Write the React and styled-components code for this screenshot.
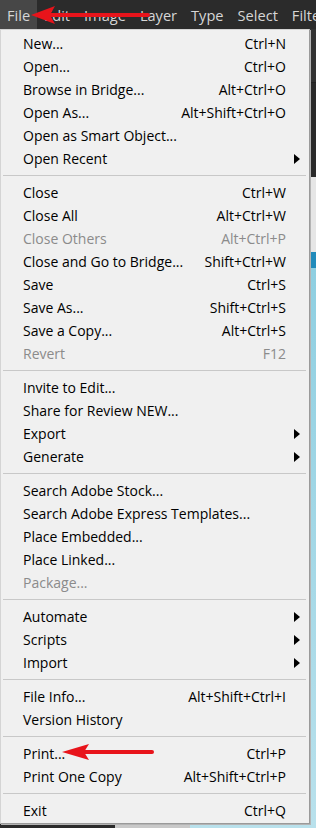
import React from "react";
import styled, { createGlobalStyle } from "styled-components";

const Global = createGlobalStyle`
  html, body { margin: 0; padding: 0; background: #2b2b2b; }
  body { font-family: "Open Sans", "Noto Sans", sans-serif; }
`;

const Screen = styled.div`
  position: relative;
  width: 316px;
  height: 828px;
  overflow: hidden;
  display: flex;
  flex-direction: column;
  background: #2b2b2b;
`;

const MenuBar = styled.div`
  height: 29px;
  display: flex;
  align-items: stretch;
  background: #2b2b2b;
  flex-shrink: 0;
`;

const BarItem = styled.div`
  display: flex;
  align-items: center;
  padding: 0 7px;
  font-size: 14.6px;
  color: #d6d6d6;
  white-space: nowrap;
  background: ${p => (p.active ? "#474747" : "transparent")};
`;

const Workspace = styled.div`
  flex: 1;
  display: flex;
  flex-direction: column;
`;

const OptionsBar = styled.div`
  height: 53px;
  background: #323232;
  border-bottom: 1px solid #222;
`;

const PanelBar = styled.div`
  height: 94px;
  background: #2a2a2a;
`;

const DocArea = styled.div`
  flex: 1;
  display: flex;
`;

const ToolColumn = styled.div`
  width: 115px;
  background: #2b2b2b;
`;

const Gutter = styled.div`
  width: 75px;
  background: #c9c9c9;
`;

const Document = styled.div`
  flex: 1;
  display: flex;
  flex-direction: column;
`;

const TabBand = styled.div`
  height: 75px;
  background: #e6e6e6;
`;

const Canvas = styled.div`
  flex: 1;
  background: linear-gradient(#218bbb 0, #218bbb 16px, #8fcfe1 16px, #b9e1ec 100%);
`;

const Dropdown = styled.div`
  position: absolute;
  top: 29px;
  left: 0;
  width: 308px;
  padding: 2px 0 1px;
  background: #f0f0f0;
  border: 1px solid #d4d4d4;
  border-right-color: #9a9a9a;
  border-bottom-color: #9a9a9a;
  box-shadow: 1px 1px 0 #b4b4b4;
`;

const Row = styled.div`
  height: 23px;
  display: grid;
  grid-template-columns: 1fr auto 23px;
  align-items: center;
  padding-left: 22px;
  font-size: 14px;
  color: ${p => (p.disabled ? "#8b8b8b" : "#000")};
  white-space: nowrap;
`;

const Shortcut = styled.span`
  text-align: right;
`;

const SubArrow = styled.span`
  justify-self: start;
  margin-left: 8px;
  width: 0;
  height: 0;
  border-top: 5px solid transparent;
  border-bottom: 5px solid transparent;
  border-left: 6px solid #000;
`;

const Separator = styled.div`
  height: 1px;
  margin: 5px 3px 5px 2px;
  background: #c8c8c8;
`;

const ArrowSvg = styled.svg`
  position: absolute;
  left: ${p => p.x}px;
  top: ${p => p.y}px;
  overflow: visible;
`;

const groups = [
  [
    ["New...", "Ctrl+N"],
    ["Open...", "Ctrl+O"],
    ["Browse in Bridge...", "Alt+Ctrl+O"],
    ["Open As...", "Alt+Shift+Ctrl+O"],
    ["Open as Smart Object..."],
    ["Open Recent", null, { sub: true }],
  ],
  [
    ["Close", "Ctrl+W"],
    ["Close All", "Alt+Ctrl+W"],
    ["Close Others", "Alt+Ctrl+P", { disabled: true }],
    ["Close and Go to Bridge...", "Shift+Ctrl+W"],
    ["Save", "Ctrl+S"],
    ["Save As...", "Shift+Ctrl+S"],
    ["Save a Copy...", "Alt+Ctrl+S"],
    ["Revert", "F12", { disabled: true }],
  ],
  [
    ["Invite to Edit..."],
    ["Share for Review NEW..."],
    ["Export", null, { sub: true }],
    ["Generate", null, { sub: true }],
  ],
  [
    ["Search Adobe Stock..."],
    ["Search Adobe Express Templates..."],
    ["Place Embedded..."],
    ["Place Linked..."],
    ["Package...", null, { disabled: true }],
  ],
  [
    ["Automate", null, { sub: true }],
    ["Scripts", null, { sub: true }],
    ["Import", null, { sub: true }],
  ],
  [
    ["File Info...", "Alt+Shift+Ctrl+I"],
    ["Version History"],
  ],
  [
    ["Print...", "Ctrl+P"],
    ["Print One Copy", "Alt+Shift+Ctrl+P"],
  ],
  [["Exit", "Ctrl+Q"]],
];

const barItems = ["File", "Edit", "Image", "Layer", "Type", "Select", "Filter"];

// red pointer arrow, tip on the left
const RedArrow = ({ x, y, length, head = 24, half = 9 }) => (
  <ArrowSvg x={x} y={y - half - 1} width={length} height={half * 2 + 2}>
    <line
      x1={head - 6}
      y1={half + 1}
      x2={length - 2}
      y2={half + 1}
      stroke="#e8141b"
      strokeWidth="4"
      strokeLinecap="round"
    />
    <polygon
      points={`0,${half + 1} ${head},1 ${head - 5},${half + 1} ${head},${half * 2 + 1}`}
      fill="#e8141b"
    />
  </ArrowSvg>
);

const App = () => (
  <>
    <Global />
    <Screen>
      <MenuBar>
        {barItems.map((b, i) => (
          <BarItem key={b} active={i === 0}>{b}</BarItem>
        ))}
      </MenuBar>
      <Workspace>
        <OptionsBar />
        <PanelBar />
        <DocArea>
          <ToolColumn />
          <Gutter />
          <Document>
            <TabBand />
            <Canvas />
          </Document>
        </DocArea>
      </Workspace>

      <Dropdown>
        {groups.map((g, gi) => (
          <React.Fragment key={gi}>
            {gi > 0 && <Separator />}
            {g.map(([label, key, opts = {}]) => (
              <Row key={label} disabled={opts.disabled}>
                <span>{label}</span>
                <Shortcut>{key}</Shortcut>
                {opts.sub ? <SubArrow /> : <span />}
              </Row>
            ))}
          </React.Fragment>
        ))}
      </Dropdown>

      <RedArrow x={31} y={15} length={119} head={24} half={9} />
      <RedArrow x={62} y={752} length={92} head={27} half={8} />
    </Screen>
  </>
);

export default App;
